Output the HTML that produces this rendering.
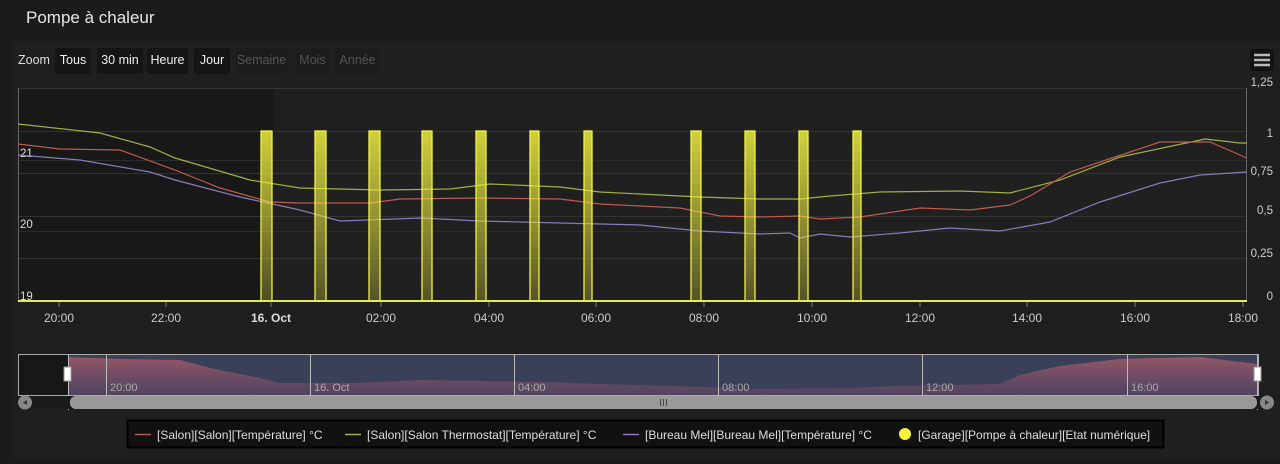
<!DOCTYPE html>
<html><head><meta charset="utf-8"><style>
*{margin:0;padding:0;box-sizing:border-box}
body{width:1280px;height:464px;background:#1b1b1b;font-family:"Liberation Sans",sans-serif;overflow:hidden;position:relative}
.title{position:absolute;left:26px;top:8px;font-size:17px;color:#e6e6e6}
.panel{position:absolute;left:13px;top:43px;width:1267px;height:415px;background:#1f1f1f}
.btn{position:absolute;top:48px;height:26px;line-height:24px;font-size:12.5px;color:#eee;background:#151515;border-radius:2px;text-align:center}
.dis{color:#555;background:#1c1c1c}
svg{position:absolute;left:0;top:0}
</style></head><body>
<div class="title">Pompe à chaleur</div>
<div class="panel"></div>
<div class="btn" style="left:16px;width:36px;background:none;color:#ddd">Zoom</div>
<div class="btn" style="left:55px;width:36px">Tous</div>
<div class="btn" style="left:97px;width:46px">30 min</div>
<div class="btn" style="left:147px;width:41px">Heure</div>
<div class="btn" style="left:194px;width:36px">Jour</div>
<div class="btn dis" style="left:236px;width:51px">Semaine</div>
<div class="btn dis" style="left:295px;width:35px">Mois</div>
<div class="btn dis" style="left:335px;width:45px">Année</div>
<svg width="1280" height="464" font-family="Liberation Sans, sans-serif">
<defs>
<linearGradient id="bg" x1="0" y1="0" x2="0" y2="1"><stop offset="0" stop-color="#f0f040" stop-opacity="0.85"/><stop offset="1" stop-color="#f0f040" stop-opacity="0.25"/></linearGradient>
<linearGradient id="ng" x1="0" y1="0" x2="0" y2="1"><stop offset="0" stop-color="#a05a6a" stop-opacity="0.9"/><stop offset="1" stop-color="#6a4a66" stop-opacity="0.5"/></linearGradient>
</defs>
<rect x="1250" y="49" width="24" height="22" rx="3" fill="#131313"/>
<g stroke="#bbb" stroke-width="2.5"><line x1="1254" y1="55" x2="1270" y2="55"/><line x1="1254" y1="60" x2="1270" y2="60"/><line x1="1254" y1="65" x2="1270" y2="65"/></g>
<rect x="18" y="88" width="256" height="213" fill="#181818"/>
<rect x="274" y="88" width="973" height="213" fill="#202020"/>
<g stroke="#333" stroke-width="1">
<line x1="18" y1="88.5" x2="1247" y2="88.5"/><line x1="18" y1="131.5" x2="1247" y2="131.5"/><line x1="18" y1="173.5" x2="1247" y2="173.5"/><line x1="18" y1="216.5" x2="1247" y2="216.5"/><line x1="18" y1="258.5" x2="1247" y2="258.5"/>
<line x1="18" y1="160.5" x2="1247" y2="160.5" stroke="#2b2b2b"/><line x1="18" y1="231.5" x2="1247" y2="231.5" stroke="#2b2b2b"/>
</g>
<line x1="18.5" y1="88" x2="18.5" y2="301" stroke="#666"/>
<line x1="1246.5" y1="88" x2="1246.5" y2="301" stroke="#666"/>
<g fill="#ddd" font-size="11.5"><text x="20" y="157">21</text><text x="20" y="228">20</text><text x="20" y="300">19</text></g>
<g fill="#ccc" font-size="11.5" text-anchor="end"><text x="1273" y="86">1,25</text><text x="1273" y="137">1</text><text x="1273" y="175">0,75</text><text x="1273" y="214">0,5</text><text x="1273" y="257">0,25</text><text x="1273" y="300">0</text></g>
<g fill="none" stroke-width="1.2">
<polyline stroke="#9cb04a" points="18,124 100,133 150,147 175,158 250,180 300,188 380,190 450,189 490,184 560,187 600,192 700,197 760,199 800,199 830,196 880,192 960,191 1010,193 1060,180 1120,157 1205,139 1240,143 1247,143"/>
<polyline stroke="#c05a4e" points="18,144 60,149 120,150 175,170 220,188 270,202 300,203 370,203 400,199 480,198 560,199 600,204 680,208 720,216 760,217 800,216 820,219 860,217 920,208 970,210 1010,205 1030,196 1070,172 1130,152 1160,142 1210,142 1247,158"/>
<polyline stroke="#8a7ab8" points="18,155 80,160 150,172 175,180 240,197 300,210 340,221 420,218 480,221 560,223 640,225 700,231 760,234 790,233 800,238 820,234 850,237 900,233 950,228 1000,231 1050,222 1100,202 1160,183 1200,175 1247,172"/>
</g>
<g fill="url(#bg)" stroke="#f2f244" stroke-width="1.3">
<rect x="261" y="131" width="11" height="170"/><rect x="315" y="131" width="11" height="170"/><rect x="369" y="131" width="11" height="170"/><rect x="422" y="131" width="10" height="170"/><rect x="476" y="131" width="10" height="170"/><rect x="530" y="131" width="9" height="170"/><rect x="584" y="131" width="8" height="170"/><rect x="691" y="131" width="10" height="170"/><rect x="745" y="131" width="10" height="170"/><rect x="799" y="131" width="9" height="170"/><rect x="853" y="131" width="8" height="170"/>
</g>
<line x1="18" y1="301" x2="1247" y2="301" stroke="#e8e860" stroke-width="2"/>
<g stroke="#777"><line x1="59" y1="302" x2="59" y2="307"/><line x1="166" y1="302" x2="166" y2="307"/><line x1="271" y1="302" x2="271" y2="307"/><line x1="381" y1="302" x2="381" y2="307"/><line x1="489" y1="302" x2="489" y2="307"/><line x1="596" y1="302" x2="596" y2="307"/><line x1="704" y1="302" x2="704" y2="307"/><line x1="812" y1="302" x2="812" y2="307"/><line x1="920" y1="302" x2="920" y2="307"/><line x1="1027" y1="302" x2="1027" y2="307"/><line x1="1135" y1="302" x2="1135" y2="307"/><line x1="1243" y1="302" x2="1243" y2="307"/></g>
<g fill="#ccc" font-size="12" text-anchor="middle"><text x="59" y="322">20:00</text><text x="166" y="322">22:00</text><text x="271" y="322" font-weight="bold" fill="#ddd">16. Oct</text><text x="381" y="322">02:00</text><text x="489" y="322">04:00</text><text x="596" y="322">06:00</text><text x="704" y="322">08:00</text><text x="812" y="322">10:00</text><text x="920" y="322">12:00</text><text x="1027" y="322">14:00</text><text x="1135" y="322">16:00</text><text x="1243" y="322">18:00</text></g>
<rect x="18" y="355" width="1240" height="40" fill="#171717"/>
<rect x="68" y="355" width="1189" height="40" fill="#3a4058"/>
<path d="M68,357 L120,359 L180,360 L210,368 L260,378 L280,383 L360,383 L420,380 L480,381 L540,382 L600,384 L700,387 L760,389 L850,388 L900,386 L1000,384 L1020,375 L1060,366 L1120,359 L1200,357 L1257,364 L1257,395 L68,395Z" fill="url(#ng)"/>
<rect x="18.5" y="354.5" width="1240" height="41" fill="none" stroke="#aaa"/>
<g stroke="#bbb"><line x1="106.5" y1="355" x2="106.5" y2="395"/><line x1="310.5" y1="355" x2="310.5" y2="395"/><line x1="514.5" y1="355" x2="514.5" y2="395"/><line x1="718.5" y1="355" x2="718.5" y2="395"/><line x1="922.5" y1="355" x2="922.5" y2="395"/><line x1="1127.5" y1="355" x2="1127.5" y2="395"/><line x1="68.5" y1="355" x2="68.5" y2="410"/><line x1="1257.5" y1="355" x2="1257.5" y2="410"/></g>
<g fill="#aaa" font-size="11"><text x="110" y="391">20:00</text><text x="314" y="391">16. Oct</text><text x="518" y="391">04:00</text><text x="722" y="391">08:00</text><text x="926" y="391">12:00</text><text x="1131" y="391">16:00</text></g>
<rect x="64" y="367" width="7" height="14" fill="#fff" stroke="#999"/>
<rect x="1254" y="367" width="7" height="14" fill="#fff" stroke="#999"/>
<rect x="18" y="396" width="1250" height="13" fill="#1a1a1a"/>
<rect x="70" y="396" width="1187" height="13" rx="6" fill="#999"/>
<circle cx="25" cy="402.5" r="7" fill="#888"/><path d="M27,400 L23,402.5 L27,405Z" fill="#333"/>
<circle cx="1267" cy="402.5" r="7" fill="#888"/><path d="M1265,400 L1269,402.5 L1265,405Z" fill="#333"/>
<g stroke="#444"><line x1="660.5" y1="399" x2="660.5" y2="406"/><line x1="663.5" y1="399" x2="663.5" y2="406"/><line x1="666.5" y1="399" x2="666.5" y2="406"/></g>
<rect x="127.5" y="420.5" width="1036" height="27" fill="#111" stroke="#000" stroke-width="2"/>
<g font-size="12" fill="#ddd">
<line x1="135" y1="434.5" x2="151" y2="434.5" stroke="#c05a4e" stroke-width="1.5"/><text x="157" y="439">[Salon][Salon][Température] °C</text>
<line x1="345" y1="434.5" x2="361" y2="434.5" stroke="#9cb04a" stroke-width="1.5"/><text x="367" y="439">[Salon][Salon Thermostat][Température] °C</text>
<line x1="623" y1="434.5" x2="639" y2="434.5" stroke="#8a7ab8" stroke-width="1.5"/><text x="645" y="439">[Bureau Mel][Bureau Mel][Température] °C</text>
<circle cx="905" cy="434" r="6" fill="#f4f43a"/><text x="918" y="439">[Garage][Pompe à chaleur][Etat numérique]</text>
</g>
</svg>
</body></html>
